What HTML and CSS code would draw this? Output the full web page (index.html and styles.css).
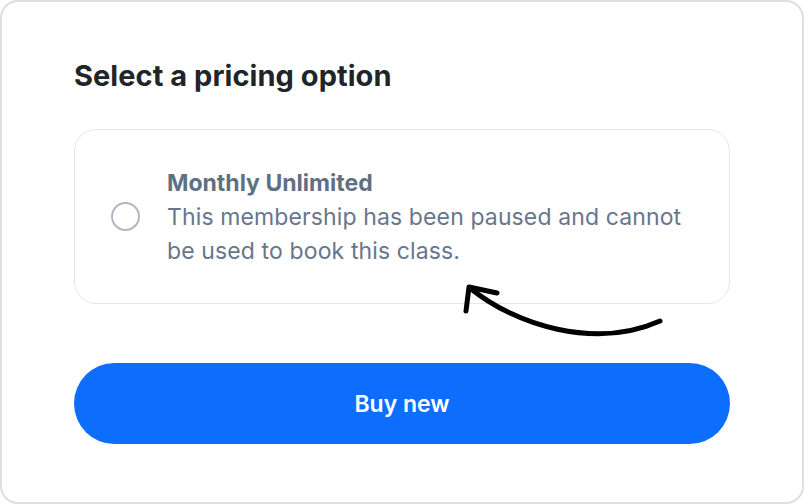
FILE: index.html
```html
<!DOCTYPE html>
<html>
<head>
<meta charset="utf-8">
<link rel="stylesheet" href="styles.css">
</head>
<body>
<div class="frame">
  <h1 class="heading">Select a pricing option</h1>
  <div class="option-wrap">
    <div class="option">
      <span class="radio"></span>
      <div class="option-text">
        <div class="option-title">Monthly Unlimited</div>
        <div class="option-desc">This membership has been paused and cannot be used to book this class.</div>
      </div>
    </div>
    <svg class="arrow" width="804" height="504" viewBox="0 0 804 504">
      <path d="M470 288 C 515 325, 595 350, 660 321" fill="none" stroke="#000" stroke-width="5" stroke-linecap="round"/>
      <path d="M466 311 L 469 287 L 497 293" fill="none" stroke="#000" stroke-width="5" stroke-linecap="round" stroke-linejoin="round"/>
    </svg>
  </div>
  <button class="buy">Buy new</button>
</div>
</body>
</html>
```
FILE: styles.css
```css
* { box-sizing: border-box; }
html, body { margin: 0; padding: 0; background: #fff; }
body { font-family: Inter, "Noto Sans", sans-serif; }
.frame {
  width: 804px;
  height: 504px;
  border: 2px solid #dedede;
  border-radius: 18px;
  padding: 56px 72px 0 72px;
  display: flex;
  flex-direction: column;
}
.heading {
  margin: 0;
  font-size: 29px;
  font-weight: 700;
  color: #212529;
  line-height: 35px;
  letter-spacing: 0.05px;
}
.option-wrap { margin-top: 36px; }
.option {
  height: 175px;
  border: 1px solid #e3e5e8;
  border-radius: 22px;
  display: flex;
  align-items: center;
  padding-left: 36px;
  gap: 27px;
}
.radio {
  width: 29px;
  height: 29px;
  border: 2px solid #b0b7c3;
  border-radius: 50%;
  flex: none;
}
.option-text { color: #67768b; font-size: 23px; margin-top: 1px; }
.option-title { font-weight: 700; line-height: 34px; color: #606f84; }
.option-desc { line-height: 34px; width: 540px; letter-spacing: 0.12px; }
.arrow {
  position: absolute;
  left: 0;
  top: 0;
  pointer-events: none;
}
.buy {
  margin-top: 59px;
  height: 81px;
  border: none;
  border-radius: 41px;
  background: #0d6efd;
  color: #fff;
  font-family: Inter, "Noto Sans", sans-serif;
  font-size: 23px;
  font-weight: 600;
}
```
